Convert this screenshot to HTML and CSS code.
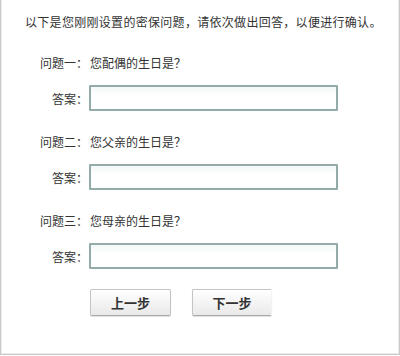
FILE: index.html
```html
<!DOCTYPE html>
<html lang="zh-CN">
<head>
<meta charset="utf-8">
<title>密保问题确认</title>
<link rel="stylesheet" href="styles.css">
</head>
<body>
<div class="frame">
  <p class="intro">以下是您刚刚设置的密保问题，请依次做出回答，以便进行确认。</p>
  <div class="form">
    <div class="group">
      <div class="row q"><span class="label">问题一：</span><span class="value">您配偶的生日是？</span></div>
      <div class="row a"><span class="label">答案：</span><input class="answer" type="text"></div>
    </div>
    <div class="group">
      <div class="row q"><span class="label">问题二：</span><span class="value">您父亲的生日是？</span></div>
      <div class="row a"><span class="label">答案：</span><input class="answer" type="text"></div>
    </div>
    <div class="group">
      <div class="row q"><span class="label">问题三：</span><span class="value">您母亲的生日是？</span></div>
      <div class="row a"><span class="label">答案：</span><input class="answer" type="text"></div>
    </div>
    <div class="actions">
      <button class="btn" type="button">上一步</button>
      <button class="btn btn-next" type="button">下一步</button>
    </div>
  </div>
</div>
</body>
</html>
```

FILE: styles.css
```css
html, body {
  margin: 0;
  padding: 0;
  background: #fff;
}
.frame {
  box-sizing: border-box;
  width: 400px;
  height: 355px;
  border: 1px solid #c8c8c8;
  border-top: none;
  box-shadow: inset 1px 0 0 #ececec, inset -1px 0 0 #ececec, inset 0 -1px 0 #ececec;
  font-family: "Noto Sans CJK SC", "Noto Sans", sans-serif;
  font-size: 12px;
  color: #333;
  padding: 12px 0 0 24px;
}
.intro {
  margin: 0;
  line-height: 20px;
  letter-spacing: 0.3px;
}
.form {
  margin-top: 20px;
}
.group {
  display: flex;
  flex-direction: column;
  gap: 13px;
  margin-bottom: 20px;
}
.group + .group {
  margin-top: 1px;
}
.row {
  display: grid;
  grid-template-columns: 63px 1fr;
  align-items: center;
  column-gap: 2px;
}
.q {
  height: 20px;
}
.label {
  text-align: right;
}
.answer {
  box-sizing: border-box;
  width: 249px;
  height: 26px;
  margin: 0 0 0 -1px;
  border: 2px solid #93aca9;
  border-radius: 1px;
  background: linear-gradient(#f3f8f8, #fff 40%);
  outline: none;
}
.actions {
  display: flex;
  gap: 21px;
  margin-top: 5px;
  padding-left: 65px;
}
.btn {
  box-sizing: border-box;
  width: 81px;
  height: 27px;
  border: 1px solid #c4c4c4;
  border-bottom-color: #a9a9a9;
  border-radius: 2px;
  background: linear-gradient(#ffffff, #f4f4f4 50%, #e9e9e9);
  box-shadow: 0 1px 1px rgba(0,0,0,0.12);
  font-family: "Noto Sans CJK SC", "Noto Sans", sans-serif;
  font-size: 13px;
  font-weight: bold;
  color: #333;
  padding: 0;
}
.btn-next {
  width: 80px;
  border-right-color: #f2f2f2;
}
```
